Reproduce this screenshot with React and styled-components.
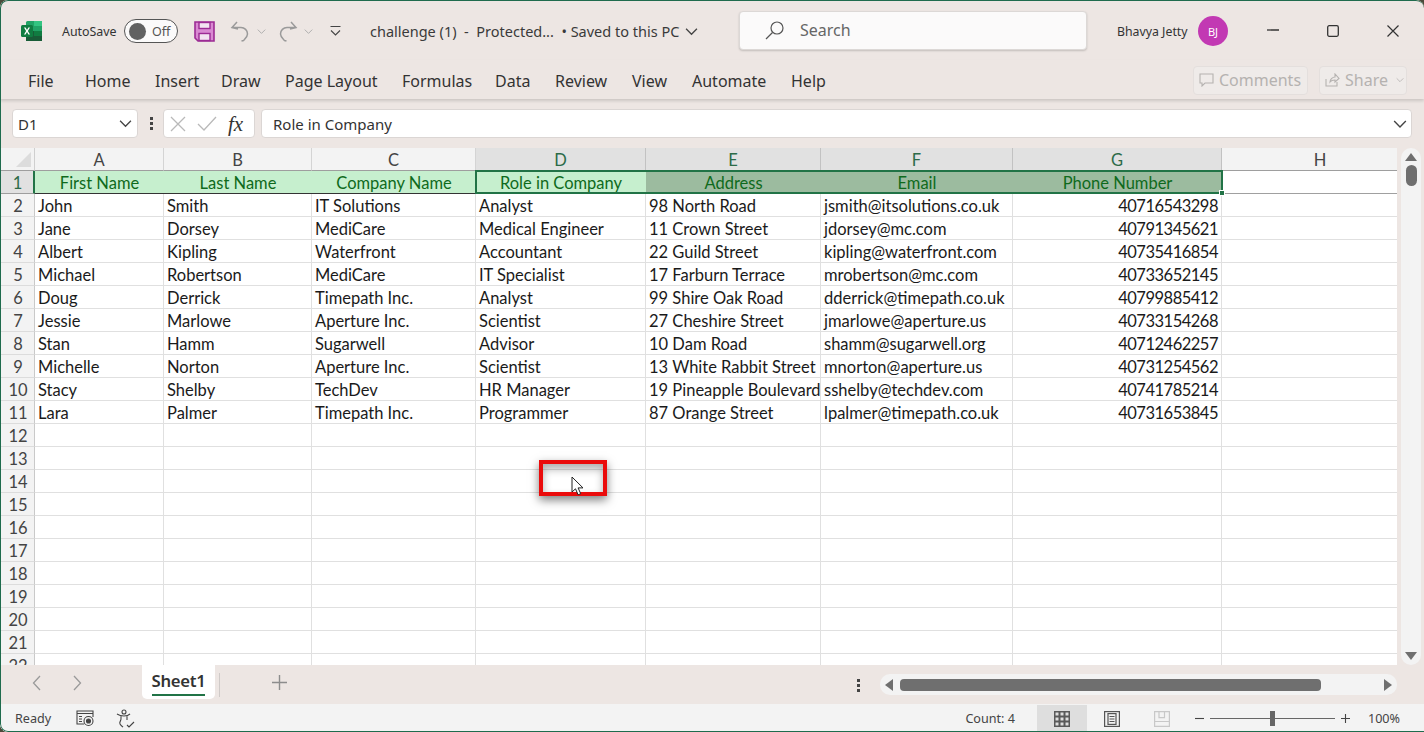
import React from 'react'
import styled, { createGlobalStyle } from 'styled-components'

const GlobalStyle = createGlobalStyle`
  html, body { margin: 0; padding: 0; background: #4a4a3a; overflow: hidden; }
  * { box-sizing: border-box; }
`
const uiFont = `"Noto Sans", "Open Sans", sans-serif`
const cellFont = `Lato, "Liberation Sans", sans-serif`
const chrome = '#ede6e3'
const green = '#217346'

const Window = styled.div`
  position: relative;
  width: 1424px;
  height: 732px;
  display: flex;
  flex-direction: column;
  background: ${chrome};
  border-radius: 8px 8px 0 8px;
  overflow: hidden;
  font-family: ${uiFont};
  color: #333;
  &::after {
    content: '';
    position: absolute;
    inset: 0;
    border: 1.5px solid #1f6b4d;
    border-right-width: 0;
    border-radius: 8px 8px 0 8px;
    pointer-events: none;
    z-index: 9;
  }
`
/* title bar */
const TitleBar = styled.div`
  height: 60px;
  flex: none;
  display: flex;
  align-items: center;
  padding: 2px 0 0 21px;
`
const AutoSave = styled.span`
  margin-left: 20px;
  width: 55px;
  flex: none;
  font-size: 12.4px;
  color: #333;
`
const Toggle = styled.div`
  margin-left: 7px;
  width: 54px;
  height: 24px;
  border: 1px solid #555;
  border-radius: 12px;
  background: #fbfafa;
  display: flex;
  align-items: center;
  padding-left: 4px;
  font-size: 12.5px;
  color: #555;
  gap: 6px;
`
const Knob = styled.i`
  width: 17px;
  height: 17px;
  border-radius: 50%;
  background: #616161;
`
const QuickIcon = styled.span`
  display: flex;
  align-items: center;
  margin-left: ${p => p.$gap}px;
`
const DocTitle = styled.span`
  margin-left: 29px;
  width: 311px;
  flex: none;
  font-size: 14.5px;
  color: #3a3a3a;
  white-space: pre;
`
const SearchBox = styled.div`
  position: relative;
  width: 348px;
  height: 39px;
  margin-left: 41px;
  margin-top: -2px;
  background: #fbfafa;
  border: 1px solid #dcd8d6;
  border-radius: 4px;
  box-shadow: 0 1px 2px rgba(0, 0, 0, 0.18);
  display: flex;
  align-items: center;
  padding-left: 25px;
  gap: 16px;
  font-size: 16px;
  color: #666;
`
const UserName = styled.span`
  margin-left: 30px;
  width: 70px;
  flex: none;
  font-size: 12.3px;
  color: #333;
  white-space: nowrap;
`
const Avatar = styled.div`
  margin-left: 11px;
  width: 30px;
  height: 30px;
  border-radius: 50%;
  background: #c239b3;
  color: #fff;
  font-size: 11px;
  display: flex;
  align-items: center;
  justify-content: center;
`
const WindowButtons = styled.div`
  margin-left: 39px;
  display: flex;
  align-items: center;
  gap: 48px;
`
/* ribbon */
const Ribbon = styled.div`
  height: 39px;
  flex: none;
  display: flex;
  align-items: center;
  padding: 1px 0 0 0;
  box-shadow: 0 2px 3px rgba(0, 0, 0, 0.14);
  position: relative;
`
const Tab = styled.span`
  position: absolute;
  left: ${p => p.$x}px;
  top: 10px;
  font-size: 16px;
  line-height: 22px;
  color: #333;
`
const RibbonActions = styled.div`
  margin-left: auto;
  margin-right: 17px;
  display: flex;
  gap: 11px;
`
const GhostButton = styled.div`
  width: ${p => p.$w}px;
  height: 29px;
  border: 1px solid #e4dfdd;
  border-radius: 4px;
  background: #efebe9;
  color: #b5b2b0;
  font-size: 16px;
  display: flex;
  align-items: center;
  padding-left: 5px;
  gap: 5px;
`
const ShareCaret = styled.span`
  margin-left: 3px;
  display: flex;
`
/* formula bar */
const FormulaRow = styled.div`
  flex: none;
  height: 49px;
  padding: 10px 12px 0 12px;
  display: flex;
  align-items: flex-start;
`
const Field = styled.div`
  height: 29px;
  background: #fff;
  border: 1px solid #dbd6d4;
  border-radius: 4px;
  display: flex;
  align-items: center;
  font-size: 15px;
  color: #333;
`
const NameBox = styled(Field)`
  width: 126px;
  padding: 0 5px 0 5px;
  justify-content: space-between;
`
const FormulaButtons = styled(Field)`
  width: 92px;
  margin-left: -1px;
  padding-left: 6px;
  gap: 11px;
`
const Fx = styled.span`
  font: italic 21px "Liberation Serif", serif;
  line-height: 24px;
  color: #333;
`
const FormulaInput = styled(Field)`
  flex: 1;
  margin-left: 6px;
  padding: 0 4px 0 11px;
  justify-content: space-between;
`
const Dots = styled.div`
  width: 26px;
  height: 29px;
  flex: none;
  display: flex;
  flex-direction: column;
  align-items: center;
  justify-content: center;
  gap: 2px;
  i { width: 3px; height: 3px; background: #444; }
`
/* sheet */
const SheetArea = styled.div`
  flex: none;
  height: 517px;
  display: flex;
  position: relative;
`
const Sheet = styled.div`
  position: relative;
  width: 1397px;
  height: 517px;
  overflow: hidden;
  background: #fff;
  display: grid;
  grid-template-columns: 35px 129px 148px 164px 170px 175px 192px 209px 197px;
  grid-auto-rows: 23px;
  font-family: ${cellFont};
  font-size: 16.5px;
  color: #1a1a1a;
`
const Corner = styled.div`
  background: #f3f3f3;
  border-right: 1px solid #cfcfcf;
  border-bottom: 1px solid #9e9e9e;
  display: flex;
  align-items: flex-end;
  justify-content: flex-end;
  padding: 0 3px 3px 0;
`
const ColHead = styled.div`
  background: ${p => (p.$on ? '#e1e1e1' : '#f3f3f3')};
  color: ${p => (p.$on ? '#2c6b48' : '#444')};
  border-right: 1px solid ${p => (p.$on ? '#c2c2c2' : '#d4d4d4')};
  border-bottom: 1px solid #9e9e9e;
  padding-top: 2px;
  display: flex;
  align-items: center;
  justify-content: center;
`
const RowHead = styled.div`
  background: ${p => (p.$on ? '#e1e1e1' : '#f3f3f3')};
  color: ${p => (p.$on ? '#2c6b48' : '#444')};
  border-right: ${p => (p.$on ? `2px solid ${green}` : '1px solid #c9c9c9')};
  border-bottom: 1px solid ${p => (p.$on ? '#9e9e9e' : '#dcdcdc')};
  display: flex;
  align-items: center;
  justify-content: center;
  padding: 2px 0 0 2px;
`
const Cell = styled.div`
  white-space: nowrap;
  padding: 2px 3px 0 3px;
  display: flex;
  align-items: center;
  justify-content: ${p => (p.$right ? 'flex-end' : 'flex-start')};
  letter-spacing: ${p => (p.$right ? '-0.5px' : '0')};
  border-right: 1px solid #e0e0e0;
  border-bottom: 1px solid #e0e0e0;
`
const HeadCell = styled(Cell)`
  justify-content: center;
  color: #0f6a1c;
  background: ${p => (p.$dim ? '#9cbb9f' : '#c6efce')};
  border-right: none;
  border-bottom: 1px solid #333;
`
const EmptyHeadCell = styled(Cell)`
  border-right: none;
  border-bottom: 1px solid #a0a0a0;
`
const Selection = styled.div`
  position: absolute;
  left: 475px;
  top: 22px;
  width: 748px;
  height: 24px;
  border: 2px solid ${green};
  pointer-events: none;
`
const Handle = styled.div`
  position: absolute;
  right: -4px;
  bottom: -4px;
  width: 6px;
  height: 6px;
  background: ${green};
  border: 1px solid #fff;
`
const Highlight = styled.div`
  position: absolute;
  left: 539px;
  top: 312px;
  width: 68px;
  height: 36px;
  border: 4px solid #ea0b0b;
  box-shadow: 0 4px 9px rgba(0, 0, 0, 0.5), inset 0 5px 9px rgba(0, 0, 0, 0.32);
`
const Pointer = styled.svg`
  position: absolute;
  left: 571px;
  top: 328px;
`
const VScroll = styled.div`
  width: 20px;
  margin-left: 4px;
  height: 517px;
  background: #f3f3f3;
  border-radius: 10px;
  display: flex;
  flex-direction: column;
  align-items: center;
  padding-top: 5px;
`
const VThumb = styled.div`
  width: 11px;
  height: 21px;
  margin-top: 4px;
  border-radius: 6px;
  background: #6f6f6f;
`
const Tri = styled.div`
  width: 0;
  height: 0;
  border-left: 6px solid transparent;
  border-right: 6px solid transparent;
  ${p => (p.$down ? 'border-top: 8px solid #6f6f6f; margin-top: auto; margin-bottom: 5px;' : 'border-bottom: 8px solid #6f6f6f;')}
`
/* tabs row */
const TabsRow = styled.div`
  flex: none;
  height: 39px;
  display: flex;
  align-items: flex-start;
`
const NavArrows = styled.div`
  width: 142px;
  height: 34px;
  padding: 10px 0 0 32px;
  display: flex;
  gap: 30px;
`
const SheetTab = styled.div`
  width: 73px;
  height: 34px;
  background: #fff;
  border-radius: 0 0 5px 5px;
  position: relative;
  display: flex;
  justify-content: center;
  font-size: 16.7px;
  font-weight: 600;
  color: #333;
  line-height: 32px;
  letter-spacing: -0.3px;
  &::after {
    content: '';
    position: absolute;
    left: 10px;
    right: 10px;
    bottom: 3px;
    height: 2px;
    background: ${green};
  }
`
const TabDivider = styled.i`
  width: 1px;
  height: 24px;
  margin: 8px 0 0 4px;
  background: #cfcac8;
`
const AddSheet = styled.span`
  margin: 10px 0 0 52px;
  display: flex;
`
const SplitDots = styled(Dots)`
  margin-left: 558px;
  margin-top: 6px;
`
const HScroll = styled.div`
  margin: 9px 0 0 9px;
  width: 517px;
  height: 21px;
  background: #f3f3f3;
  border-radius: 10px;
  display: flex;
  align-items: center;
  padding: 0 5px;
`
const HThumb = styled.div`
  width: 421px;
  height: 12px;
  margin-left: 7px;
  border-radius: 4px;
  background: #6f6f6f;
`
const SideTri = styled.div`
  width: 0;
  height: 0;
  border-top: 6px solid transparent;
  border-bottom: 6px solid transparent;
  ${p => (p.$right ? 'border-left: 8px solid #6f6f6f; margin-left: auto;' : 'border-right: 8px solid #6f6f6f;')}
`
/* status bar */
const StatusBar = styled.div`
  flex: 1;
  background: #f3f3f3;
  display: flex;
  align-items: center;
  font-size: 12.6px;
  color: #444;
  padding-left: 15px;
`
const StatusIcon = styled.span`
  display: flex;
  margin-left: ${p => p.$gap}px;
`
const Count = styled.span`
  margin-left: auto;
  margin-right: 22px;
`
const ViewButton = styled.div`
  width: 50px;
  height: 27px;
  margin-top: 1px;
  background: ${p => (p.$on ? '#dedede' : 'transparent')};
  display: flex;
  align-items: center;
  justify-content: center;
`
const Zoom = styled.div`
  display: flex;
  align-items: center;
  margin: 0 24px 0 8px;
`
const Slider = styled.div`
  position: relative;
  width: 125px;
  height: 1px;
  margin: 0 6px;
  background: #666;
  &::after {
    content: '';
    position: absolute;
    left: 60px;
    top: -7px;
    width: 5px;
    height: 15px;
    background: #666;
  }
`
const Percent = styled.span`
  margin-left: 18px;
`

const columns = ['A', 'B', 'C', 'D', 'E', 'F', 'G', 'H']
const headers = ['First Name', 'Last Name', 'Company Name', 'Role in Company', 'Address', 'Email', 'Phone Number']
const people = [
  ['John', 'Smith', 'IT Solutions', 'Analyst', '98 North Road', 'jsmith@itsolutions.co.uk', '40716543298'],
  ['Jane', 'Dorsey', 'MediCare', 'Medical Engineer', '11 Crown Street', 'jdorsey@mc.com', '40791345621'],
  ['Albert', 'Kipling', 'Waterfront', 'Accountant', '22 Guild Street', 'kipling@waterfront.com', '40735416854'],
  ['Michael', 'Robertson', 'MediCare', 'IT Specialist', '17 Farburn Terrace', 'mrobertson@mc.com', '40733652145'],
  ['Doug', 'Derrick', 'Timepath Inc.', 'Analyst', '99 Shire Oak Road', 'dderrick@timepath.co.uk', '40799885412'],
  ['Jessie', 'Marlowe', 'Aperture Inc.', 'Scientist', '27 Cheshire Street', 'jmarlowe@aperture.us', '40733154268'],
  ['Stan', 'Hamm', 'Sugarwell', 'Advisor', '10 Dam Road', 'shamm@sugarwell.org', '40712462257'],
  ['Michelle', 'Norton', 'Aperture Inc.', 'Scientist', '13 White Rabbit Street', 'mnorton@aperture.us', '40731254562'],
  ['Stacy', 'Shelby', 'TechDev', 'HR Manager', '19 Pineapple Boulevard', 'sshelby@techdev.com', '40741785214'],
  ['Lara', 'Palmer', 'Timepath Inc.', 'Programmer', '87 Orange Street', 'lpalmer@timepath.co.uk', '40731653845'],
]
const tabs = [
  ['File', 28], ['Home', 85], ['Insert', 155], ['Draw', 221], ['Page Layout', 285], ['Formulas', 402],
  ['Data', 495], ['Review', 555], ['View', 632], ['Automate', 692], ['Help', 791],
]

function Chevron({ size = 12, color = '#444' }) {
  return (
    <svg width={size} height={size} viewBox="0 0 12 12" fill="none" stroke={color} strokeWidth="1.2">
      <path d="M1 3.5 6 8.5 11 3.5" />
    </svg>
  )
}

function ExcelLogo() {
  return (
    <svg width="21" height="20" viewBox="0 0 21 20">
      <rect x="5" y="0" width="16" height="20" rx="1.5" fill="#21a366" />
      <rect x="13" y="0" width="8" height="5" fill="#33c481" />
      <rect x="13" y="5" width="8" height="5" fill="#21a366" />
      <rect x="5" y="10" width="8" height="10" fill="#185c37" />
      <rect x="13" y="10" width="8" height="5" fill="#107c41" />
      <rect x="13" y="15" width="8" height="5" fill="#185c37" />
      <rect x="0" y="4" width="12" height="12" rx="1.5" fill="#107c41" />
      <path d="M3 6.5h1.6L6 9l1.4-2.5H9L6.9 10 9 13.5H7.4L6 11l-1.4 2.5H3L5.1 10z" fill="#fff" />
    </svg>
  )
}

function SaveIcon() {
  return (
    <svg width="21" height="21" viewBox="0 0 21 21">
      <path d="M1 1h19v19H4l-3-3z" fill="#d98ad2" stroke="#9c2b94" strokeWidth="1.6" />
      <rect x="5" y="1.5" width="11" height="6" fill="#f3e3f1" stroke="#9c2b94" strokeWidth="1.4" />
      <rect x="5" y="12.5" width="11" height="7" fill="#f3e3f1" stroke="#9c2b94" strokeWidth="1.4" />
    </svg>
  )
}

const FlipSvg = styled.svg`
  transform: ${p => (p.$flip ? 'scaleX(-1)' : 'none')};
`

function UndoIcon({ flip }) {
  return (
    <FlipSvg $flip={flip} width="20" height="21" viewBox="0 0 20 21" fill="none" stroke="#9a9a9a" strokeWidth="1.5">
      <path d="M7 1 2 6.5 8 8M2.5 6.5H11a6.5 6.5 0 0 1 6.5 6.5c0 3-2 4.5-4 6.5L11.5 20" />
    </FlipSvg>
  )
}

function Customize() {
  return (
    <svg width="11" height="12" viewBox="0 0 11 12" fill="none" stroke="#444" strokeWidth="1.1">
      <path d="M0.5 1.5h10M1 5.5 5.5 10 10 5.5" />
    </svg>
  )
}

function SearchIcon() {
  return (
    <svg width="19" height="19" viewBox="0 0 19 19" fill="none" stroke="#555" strokeWidth="1.2">
      <circle cx="12" cy="7" r="6" />
      <path d="M7.5 11.5 1 18" />
    </svg>
  )
}

function FormulaMark({ kind }) {
  if (kind === 'x') return <svg width="16" height="16" viewBox="0 0 16 16" stroke="#b9b9b9" strokeWidth="1.3"><path d="M1 1 15 15M15 1 1 15" /></svg>
  return <svg width="20" height="16" viewBox="0 0 20 16" fill="none" stroke="#b9b9b9" strokeWidth="1.3"><path d="M1 8 7 14 19 1" /></svg>
}

function PageIcon({ type }) {
  if (type === 'grid') {
    return (
      <svg width="16" height="16" viewBox="0 0 16 16" fill="#5a5a5a">
        <path d="M0 0h16v16H0zM1.5 1.5v3h3v-3zm5 0v3h3v-3zm5 0v3h3v-3zm-10 5v3h3v-3zm5 0v3h3v-3zm5 0v3h3v-3zm-10 5v3h3v-3zm5 0v3h3v-3zm5 0v3h3v-3z" fillRule="evenodd" />
      </svg>
    )
  }
  if (type === 'page') {
    return (
      <svg width="16" height="16" viewBox="0 0 16 16" fill="none" stroke="#555" strokeWidth="1.2">
        <rect x="0.6" y="0.6" width="14.8" height="14.8" />
        <rect x="4" y="2.6" width="8" height="10.8" />
        <path d="M5.5 5.5h5M5.5 8h5M5.5 10.5h5" />
      </svg>
    )
  }
  return (
    <svg width="16" height="16" viewBox="0 0 16 16" fill="none" stroke="#c8c8c8" strokeWidth="1.2">
      <path d="M0.6 0.6h14.8v14.8H0.6zM0.6 10.5h14.8M5 0.6v6h5.5V.6" />
    </svg>
  )
}

export default function App() {
  const blankRows = Array.from({ length: 11 }, (_, i) => i + 12)
  return (
    <Window>
      <GlobalStyle />
      <TitleBar>
        <ExcelLogo />
        <AutoSave>AutoSave</AutoSave>
        <Toggle><Knob />Off</Toggle>
        <QuickIcon $gap={16}><SaveIcon /></QuickIcon>
        <QuickIcon $gap={15}><UndoIcon /></QuickIcon>
        <QuickIcon $gap={7}><Chevron size={9} color="#aaa" /></QuickIcon>
        <QuickIcon $gap={12}><UndoIcon flip /></QuickIcon>
        <QuickIcon $gap={6}><Chevron size={9} color="#aaa" /></QuickIcon>
        <QuickIcon $gap={17}><Customize /></QuickIcon>
        <DocTitle>{'challenge (1)  -  Protected...  • Saved to this PC'}</DocTitle>
        <QuickIcon $gap={4}><Chevron size={13} /></QuickIcon>
        <SearchBox><SearchIcon />Search</SearchBox>
        <UserName>Bhavya Jetty</UserName>
        <Avatar>BJ</Avatar>
        <WindowButtons>
          <svg width="12" height="13" viewBox="0 0 12 13" stroke="#333" strokeWidth="1.3"><path d="M0 5h12" /></svg>
          <svg width="12" height="12" viewBox="0 0 12 12" fill="none" stroke="#333" strokeWidth="1.3"><rect x="0.7" y="0.7" width="10.6" height="10.6" rx="1.5" /></svg>
          <svg width="12" height="12" viewBox="0 0 12 12" stroke="#333" strokeWidth="1.2"><path d="M0.5 0.5 11.500 11.500M11.500 0.5 0.5 11.500" /></svg>
        </WindowButtons>
      </TitleBar>

      <Ribbon>
        {tabs.map(([label, x]) => <Tab key={label} $x={x}>{label}</Tab>)}
        <RibbonActions>
          <GhostButton $w={115}>
            <svg width="15" height="14" viewBox="0 0 15 14" fill="none" stroke="#b5b2b0" strokeWidth="1.1"><path d="M1 1h13v9H6l-3 3v-3H1z" /></svg>
            Comments
          </GhostButton>
          <GhostButton $w={88}>
            <svg width="15" height="14" viewBox="0 0 15 14" fill="none" stroke="#b5b2b0" strokeWidth="1.1"><path d="M1 6v7h11V9M5 9c0-3 3-5 5-5V1l4 4.5L10 9V7C8 7 6 7.500 5 9z" /></svg>
            Share
            <ShareCaret><Chevron size={8} color="#b5b2b0" /></ShareCaret>
          </GhostButton>
        </RibbonActions>
      </Ribbon>

      <FormulaRow>
        <NameBox>D1<Chevron size={13} /></NameBox>
        <Dots><i /><i /><i /></Dots>
        <FormulaButtons>
          <FormulaMark kind="x" />
          <FormulaMark kind="check" />
          <Fx>fx</Fx>
        </FormulaButtons>
        <FormulaInput>Role in Company<Chevron size={14} /></FormulaInput>
      </FormulaRow>

      <SheetArea>
        <Sheet>
          <Corner>
            <svg width="15" height="15" viewBox="0 0 15 15"><path d="M15 0V15H0z" fill="#dcdcdc" /></svg>
          </Corner>
          {columns.map((c, i) => <ColHead key={c} $on={i >= 3 && i <= 6}>{c}</ColHead>)}

          <RowHead $on>1</RowHead>
          {headers.map((h, i) => <HeadCell key={h} $dim={i >= 4}>{h}</HeadCell>)}
          <EmptyHeadCell />

          {people.map((person, r) => (
            <React.Fragment key={person[0]}>
              <RowHead>{r + 2}</RowHead>
              {person.map((value, i) => <Cell key={i} $right={i === 6}>{value}</Cell>)}
              <Cell />
            </React.Fragment>
          ))}

          {blankRows.map(n => (
            <React.Fragment key={n}>
              <RowHead>{n}</RowHead>
              {columns.map(c => <Cell key={c} />)}
            </React.Fragment>
          ))}

          <Selection>
            <Handle />
          </Selection>
          <Highlight />
          <Pointer width="14" height="20" viewBox="0 0 14 20">
            <path d="M1 1v15l3.500-3.200 2.600 6 2.600-1.100-2.600-5.800H12z" fill="#fff" stroke="#222" strokeWidth="1" />
          </Pointer>
        </Sheet>
        <VScroll>
          <Tri />
          <VThumb />
          <Tri $down />
        </VScroll>
      </SheetArea>

      <TabsRow>
        <NavArrows>
          <svg width="10" height="16" viewBox="0 0 10 16" fill="none" stroke="#9a9a9a" strokeWidth="1.3"><path d="M8 1 1.500 8 8 15" /></svg>
          <svg width="10" height="16" viewBox="0 0 10 16" fill="none" stroke="#9a9a9a" strokeWidth="1.3"><path d="M2 1 8.500 8 2 15" /></svg>
        </NavArrows>
        <SheetTab>Sheet1</SheetTab>
        <TabDivider />
        <AddSheet>
          <svg width="15" height="15" viewBox="0 0 15 15" stroke="#8d8d8d" strokeWidth="1.4"><path d="M7.500 0v15M0 7.500h15" /></svg>
        </AddSheet>
        <SplitDots><i /><i /><i /></SplitDots>
        <HScroll>
          <SideTri />
          <HThumb />
          <SideTri $right />
        </HScroll>
      </TabsRow>

      <StatusBar>
        Ready
        <StatusIcon $gap={25}>
          <svg width="18" height="18" viewBox="0 0 18 18" fill="none" stroke="#444" strokeWidth="1.1">
            <path d="M8 15H1V2h16v6M1 4.500h16M3 7.500h3M3 10h3M3 12.500h3" />
            <circle cx="12.500" cy="12" r="4.500" /><circle cx="12.500" cy="12" r="2" fill="#444" />
          </svg>
        </StatusIcon>
        <StatusIcon $gap={22}>
          <svg width="19" height="19" viewBox="0 0 19 19" fill="none" stroke="#444" strokeWidth="1.1">
            <circle cx="8" cy="3" r="2" />
            <path d="M1 5c3 2 4 2 7 2s4 0 6-2M5 7v3c0 2-2 3-1 5s2 2 3 3M11 7v4M11 16l2 2 5-5" />
          </svg>
        </StatusIcon>
        <Count>Count: 4</Count>
        <ViewButton $on><PageIcon type="grid" /></ViewButton>
        <ViewButton><PageIcon type="page" /></ViewButton>
        <ViewButton><PageIcon type="break" /></ViewButton>
        <Zoom>
          <svg width="9" height="9" viewBox="0 0 9 9" stroke="#444" strokeWidth="1.1"><path d="M0 4.500h9" /></svg>
          <Slider />
          <svg width="9" height="9" viewBox="0 0 9 9" stroke="#444" strokeWidth="1.1"><path d="M0 4.500h9M4.500 0v9" /></svg>
          <Percent>100%</Percent>
        </Zoom>
      </StatusBar>
    </Window>
  )
}
